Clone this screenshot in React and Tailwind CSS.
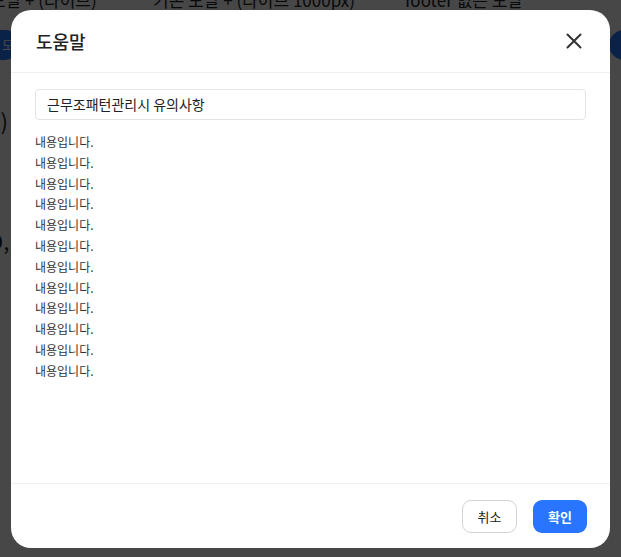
import React from "react";

const lines = Array.from({ length: 12 });

export default function App() {
  return (
    <div
      className="relative w-[621px] h-[557px] overflow-hidden bg-white"
      style={{ fontFamily: '"Noto Sans CJK KR", "Noto Sans", sans-serif' }}
    >
      {/* background page */}
      <div className="flex flex-col -mt-[12px] text-[#222]">
        <div className="flex items-center h-[24px] text-[17px] leading-[24px] whitespace-nowrap">
          <span className="-ml-[10px] w-[163px] shrink-0">모달 + (라이브)</span>
          <span className="w-[252px] shrink-0">기본 모달 + (라이브 1000px)</span>
          <span className="shrink-0">footer 없는 모달</span>
        </div>
        <div className="flex justify-between mt-[18px] h-[30px]">
          <div className="-ml-[60px] w-[80px] h-[30px] rounded-full bg-[#2979ff] text-white text-[13px] flex items-center justify-end pr-[6px]">
            보기 모
          </div>
          <div className="-mr-[60px] w-[72px] h-[30px] rounded-full bg-[#2979ff]" />
        </div>
        <div className="text-[22px] leading-[24px] mt-[48px] -ml-[12px]">X)</div>
        <div className="text-[22px] leading-[24px] mt-[96px] -ml-[12px]">D,</div>
      </div>

      {/* overlay */}
      <div className="absolute inset-0 bg-black/[0.72]" />

      {/* modal */}
      <div className="absolute left-[11px] top-[10px] w-[599px] h-[538px] bg-white rounded-[20px] flex flex-col overflow-hidden">
        <div className="h-[63px] shrink-0 flex items-center justify-between pl-[25px] pr-[26px] border-b border-[#f0f0f0]">
          <h2 className="text-[18px] font-medium text-[#222] leading-none">도움말</h2>
          <svg width="20" height="20" viewBox="0 0 20 20" className="text-[#333]">
            <path d="M3.5 3.5 L16.5 16.5 M16.5 3.5 L3.5 16.5" stroke="currentColor" strokeWidth="2" strokeLinecap="round" />
          </svg>
        </div>
        <div className="flex-1 px-[24px] pt-[16px]">
          <div className="h-[31px] border border-[#e3e3e3] rounded-[4px] flex items-center px-[11px] text-[14px] text-[#222]">
            근무조패턴관리시 유의사항
          </div>
          <div className="mt-[12px] text-[12px] leading-[20.8px] text-[#333]">
            {lines.map((_, i) => (
              <p key={i}>내용입니다.</p>
            ))}
          </div>
        </div>
        <div className="h-[65px] shrink-0 border-t border-[#f0f0f0] flex items-start justify-end gap-[16px] pt-[16px] pr-[23px]">
          <button className="w-[55px] h-[33px] rounded-[9px] border border-[#d4d4d4] bg-white text-[13px] text-[#222]">
            취소
          </button>
          <button className="w-[54px] h-[33px] rounded-[9px] bg-[#2a75ff] text-[13px] font-semibold text-white">
            확인
          </button>
        </div>
      </div>
    </div>
  );
}
